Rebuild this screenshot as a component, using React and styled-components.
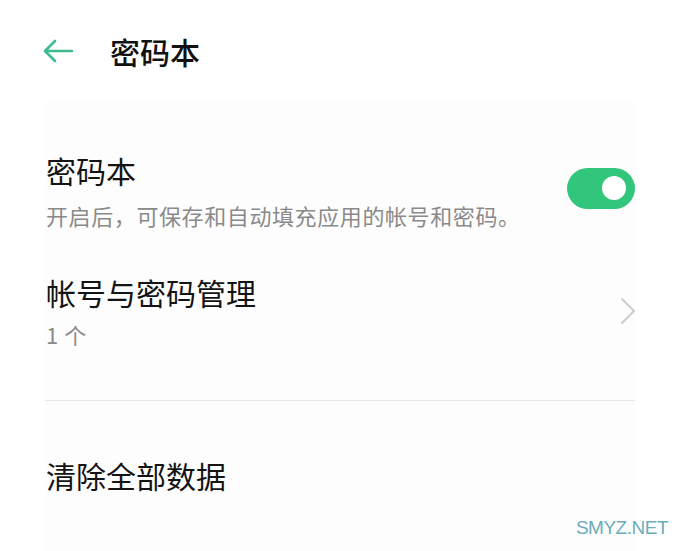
import React, { useState } from "react";
import styled, { createGlobalStyle } from "styled-components";

const GlobalStyle = createGlobalStyle`
  html, body {
    margin: 0;
    padding: 0;
    background: #ffffff;
  }
  body {
    font-family: "Noto Sans CJK SC", "Noto Sans", sans-serif;
    color: #111111;
  }
`;

function App() {
  const [enabled, setEnabled] = useState(true);
  return (
    <Page>
      <GlobalStyle />
      <Header>
        <BackButton aria-label="back">
          <svg width="32" height="24" viewBox="0 0 32 24" fill="none">
            <path
              d="M30 12H3M13 2L3 12l10 10"
              stroke="#3dbd8b"
              strokeWidth="2.6"
              strokeLinecap="round"
              strokeLinejoin="round"
            />
          </svg>
        </BackButton>
        <Title>密码本</Title>
      </Header>
      <Content>
        <Row $top={50}>
          <TextBlock $gap={13}>
            <RowTitle>密码本</RowTitle>
            <RowSub>开启后，可保存和自动填充应用的帐号和密码。</RowSub>
          </TextBlock>
          <Toggle $on={enabled} onClick={() => setEnabled(!enabled)}>
            <Knob $on={enabled} />
          </Toggle>
        </Row>
        <Row $top={45}>
          <TextBlock $gap={10}>
            <RowTitle>帐号与密码管理</RowTitle>
            <RowSub>1 个</RowSub>
          </TextBlock>
          <Chevron width="16" height="28" viewBox="0 0 16 28" fill="none">
            <path
              d="M2 2l12 12L2 26"
              stroke="#cccccc"
              strokeWidth="2"
              strokeLinecap="round"
              strokeLinejoin="round"
            />
          </Chevron>
        </Row>
        <Divider />
        <Row $top={56}>
          <RowTitle>清除全部数据</RowTitle>
        </Row>
      </Content>
      <Watermark>SMYZ.NET</Watermark>
    </Page>
  );
}

export default App;

const Page = styled.div`
  position: relative;
  width: 680px;
  height: 551px;
  overflow: hidden;
  background: #ffffff;
`;

const Header = styled.div`
  height: 102px;
  display: flex;
  align-items: center;
  padding-left: 42px;
`;

const BackButton = styled.button`
  display: flex;
  align-items: center;
  padding: 0;
  border: none;
  background: none;
  cursor: pointer;
  margin-right: 36px;
`;

const Title = styled.div`
  font-size: 30px;
  line-height: 34px;
  font-weight: 500;
  color: #111111;
`;

const Content = styled.div`
  margin: 0 45px;
  height: 449px;
  background: #fefdfe;
`;

const Row = styled.div`
  display: flex;
  align-items: center;
  justify-content: space-between;
  padding-top: ${(p) => p.$top}px;
`;

const TextBlock = styled.div`
  display: flex;
  flex-direction: column;
  gap: ${(p) => p.$gap}px;
`;

const RowTitle = styled.div`
  font-size: 30px;
  line-height: 36px;
  color: #141414;
  padding-left: 1px;
`;

const RowSub = styled.div`
  font-size: 22px;
  line-height: 28px;
  letter-spacing: 0.6px;
  color: #8a8a8a;
  padding-left: 1px;
`;

const Toggle = styled.div`
  width: 68px;
  height: 41px;
  border-radius: 21px;
  background: ${(p) => (p.$on ? "#31c67c" : "#d5d5d5")};
  display: flex;
  align-items: center;
  justify-content: ${(p) => (p.$on ? "flex-end" : "flex-start")};
  padding: 0 9px;
  box-sizing: border-box;
  cursor: pointer;
  margin-top: -5px;
`;

const Knob = styled.div`
  width: 24px;
  height: 24px;
  border-radius: 50%;
  background: #ffffff;
`;

const Chevron = styled.svg`
  margin-right: -1px;
`;

const Divider = styled.div`
  height: 1px;
  background: #e6e6e6;
  margin-top: 52px;
`;

const Watermark = styled.div`
  position: absolute;
  right: 12px;
  bottom: 12px;
  font-family: "Liberation Sans", sans-serif;
  font-size: 19px;
  letter-spacing: -0.5px;
  color: #6badb9;
`;
